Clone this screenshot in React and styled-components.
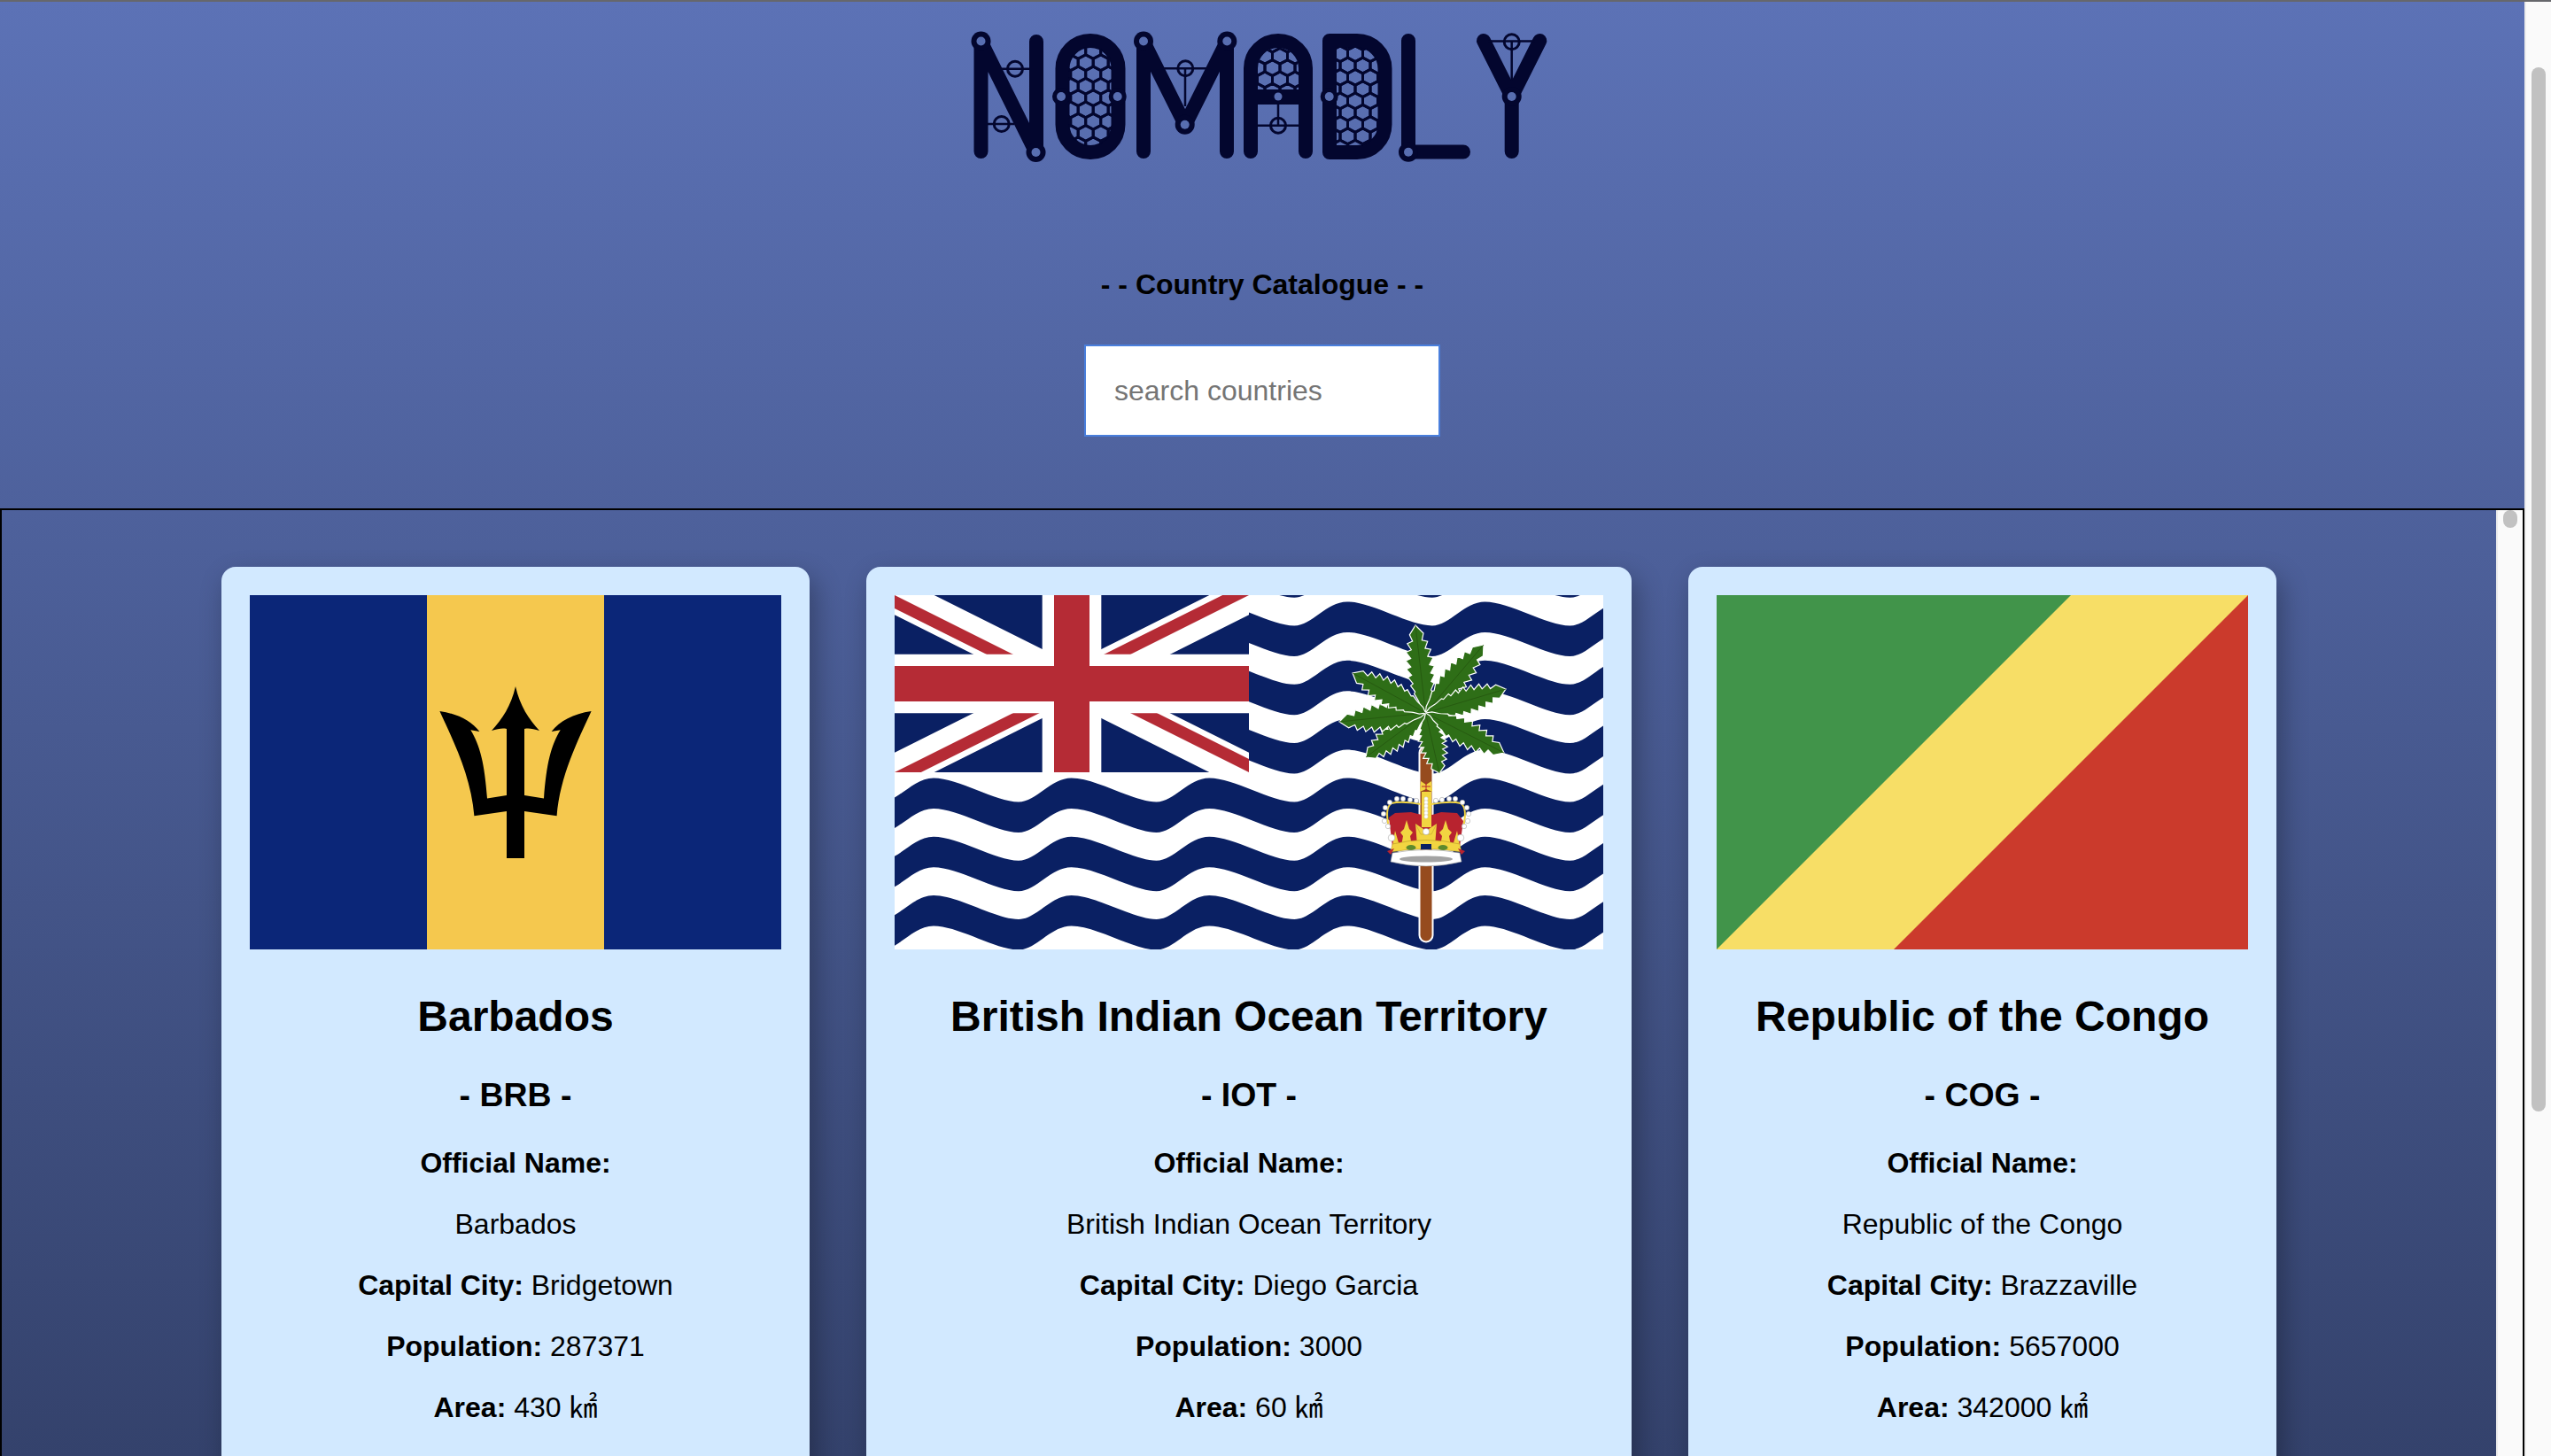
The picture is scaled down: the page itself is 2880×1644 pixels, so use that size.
import React from "react";
import styled, { createGlobalStyle } from "styled-components";

const INK = "#03062e";
const HOLE = "#586eb1";

const countries = [
  {
    name: "Barbados",
    code: "BRB",
    official: "Barbados",
    capital: "Bridgetown",
    population: 287371,
    area: 430,
    Flag: BarbadosFlag,
  },
  {
    name: "British Indian Ocean Territory",
    code: "IOT",
    official: "British Indian Ocean Territory",
    capital: "Diego Garcia",
    population: 3000,
    area: 60,
    Flag: BiotFlag,
  },
  {
    name: "Republic of the Congo",
    code: "COG",
    official: "Republic of the Congo",
    capital: "Brazzaville",
    population: 5657000,
    area: 342000,
    Flag: CongoFlag,
  },
];

// honeycomb cells inside the hollow letters of the logo
function Honeycomb({ clip, ax, ay, x0, x1, y0, y1 }) {
  const dx = 17;
  const dy = 13.3;
  const v = dy / 1.5;
  const cells = [];
  for (let r = -12; r <= 12; r++) {
    const y = ay + r * dy;
    if (y < y0 - 10 || y > y1 + 10) continue;
    for (let c = -8; c <= 8; c++) {
      const x = ax + c * dx + (r % 2 !== 0 ? dx / 2 : 0);
      if (x < x0 - 10 || x > x1 + 10) continue;
      const pts = [
        [x, y - v],
        [x + dx / 2, y - v / 2],
        [x + dx / 2, y + v / 2],
        [x, y + v],
        [x - dx / 2, y + v / 2],
        [x - dx / 2, y - v / 2],
      ];
      cells.push(<polygon key={r + "_" + c} points={pts.map((p) => p.join(",")).join(" ")} />);
    }
  }
  return (
    <g clipPath={`url(#${clip})`} fill="none" stroke={INK} strokeWidth="3">
      {cells}
    </g>
  );
}

function Node({ x, y, r = 11, hole = 5 }) {
  return (
    <>
      <circle cx={x} cy={y} r={r} fill={INK} />
      <circle cx={x} cy={y} r={hole} fill={HOLE} />
    </>
  );
}

function Ring({ x, y, r = 8.5 }) {
  return <circle cx={x} cy={y} r={r} fill="none" stroke={INK} strokeWidth="3" />;
}

function Logo() {
  return (
    <LogoSvg viewBox="1095 30 660 160" role="img" aria-label="Nomadly">
      <defs>
        <clipPath id="hole-o">
          <rect x="1206" y="53" width="50" height="112" rx="24" />
        </clipPath>
        <clipPath id="hole-a">
          <path d="M1420 102V77A23 23 0 0 1 1466 77V102Z" />
        </clipPath>
        <clipPath id="hole-d">
          <path d="M1508 53H1532A24 24 0 0 1 1556 77V141A24 24 0 0 1 1532 165H1508Z" />
        </clipPath>
      </defs>

      <g fill="none" stroke={INK} strokeWidth="16" strokeLinecap="round" strokeLinejoin="round">
        {/* N */}
        <path d="M1107.5 47V171M1107.5 47L1169.5 172M1170 47V171" />
        {/* O */}
        <rect x="1199.5" y="46" width="63" height="126" rx="31.5" />
        {/* M */}
        <path d="M1291 47V171M1291 47L1338 141L1385 47V171" />
        {/* A */}
        <path d="M1412 171V77A31 31 0 0 1 1474 77V171" />
        {/* D */}
        <path d="M1501 46H1532A31.5 31.5 0 0 1 1563.5 77.5V140.5A31.5 31.5 0 0 1 1532 172H1501Z" />
        {/* L */}
        <path d="M1590 46V171.5H1652" />
        {/* Y */}
        <path d="M1675 46L1706.7 109L1738.3 46M1706.7 109V171" />
      </g>

      <rect x="1412" y="101" width="62" height="17" fill={INK} />

      <g stroke={INK} strokeWidth="2.5">
        <path d="M1130 77.7H1162M1115 140H1145" />
        <path d="M1305 77.3H1370M1338 77V120" />
        <path d="M1443 109V142M1420 141.7H1466" />
        <path d="M1680 46.5H1733M1706.7 47V92" />
      </g>

      <Honeycomb clip="hole-o" ax={1225.7} ay={70.7} x0={1206} x1={1256} y0={53} y1={165} />
      <Honeycomb clip="hole-a" ax={1445} ay={63.3} x0={1420} x1={1466} y0={53} y1={102} />
      <Honeycomb clip="hole-d" ax={1530} ay={60.7} x0={1508} x1={1556} y0={53} y1={165} />

      <Node x={1107.5} y={46.5} />
      <Node x={1169.5} y={172} />
      <Ring x={1146} y={77.7} />
      <Ring x={1130.7} y={140} />
      <Node x={1198} y={109} r={10} />
      <Node x={1261.7} y={109} r={10} />
      <Node x={1291} y={46.5} />
      <Node x={1385.3} y={46.5} />
      <Node x={1337.7} y={140.7} />
      <Ring x={1338.3} y={77.3} />
      <circle cx={1443} cy={109} r={4.5} fill={HOLE} />
      <Ring x={1443} y={141.7} />
      <Node x={1500.7} y={109} r={10} />
      <Node x={1590} y={171.7} />
      <Node x={1706.7} y={109} />
      <Ring x={1706.7} y={47.3} />
    </LogoSvg>
  );
}

function BarbadosFlag() {
  return (
    <FlagSvg viewBox="0 0 600 400" $w={600}>
      <rect width="600" height="400" fill="#0b2678" />
      <rect x="200" width="200" height="400" fill="#f5c84e" />
      <path
        d="M300 103C305 125 315 140 327 153C320 151 315 150 310 151V226L332 229.5C335 190 340 170 350.7 152.3L340.6 154C350 142 365 134 385.6 131C370 165 350 205 346.6 249.3L310 244V297H290V244L253.4 249.3C250 205 230 165 214.4 131C235 134 250 142 259.4 154L249.3 152.3C260 170 265 190 268 229.5L290 226V151C285 150 280 151 273 153C285 140 295 125 300 103Z"
        fill="#000"
      />
    </FlagSvg>
  );
}

function CongoFlag() {
  return (
    <FlagSvg viewBox="0 0 600 400" $w={600}>
      <rect width="600" height="400" fill="#f7de66" />
      <path d="M0 0H400L0 400Z" fill="#41944a" />
      <path d="M600 0V400H200Z" fill="#cb3a2c" />
    </FlagSvg>
  );
}

function waveBand(top) {
  const period = 155.6;
  const start = -111.6;
  const count = 7;
  const end = start + period * count;
  let d = `M${start} ${top}`;
  for (let i = 0; i < count; i++) {
    const c = start + i * period;
    d += `C${c + 28} ${top} ${c + 70} ${top + 27} ${c + 96} ${top + 27}`;
    d += `C${c + 116} ${top + 27} ${c + 132} ${top} ${c + period} ${top}`;
  }
  const low = top + 34.5;
  d += `L${end} ${low}`;
  for (let i = count - 1; i >= 0; i--) {
    const c = start + i * period;
    d += `C${c + 132} ${low} ${c + 116} ${low + 27} ${c + 96} ${low + 27}`;
    d += `C${c + 70} ${low + 27} ${c + 28} ${low} ${c} ${low}`;
  }
  return d + "Z";
}

function frond(cx, cy, tx, ty, maxW = 16) {
  const len = Math.hypot(tx - cx, ty - cy);
  const ux = (tx - cx) / len;
  const uy = (ty - cy) / len;
  const at = (t, w) => `${cx + ux * len * t + -uy * w},${cy + uy * len * t + ux * w}`;
  const teeth = 9;
  const side = [];
  for (let i = 0; i < teeth; i++) {
    const t = 0.06 + (i / teeth) * 0.86;
    const w = maxW * Math.pow(Math.sin(Math.PI * Math.min(t + 0.04, 0.99)), 0.8);
    side.push([t, w * 0.68], [t + 0.075, w]);
  }
  const left = side.map(([t, w]) => at(t, w));
  const right = side.map(([t, w]) => at(t, -w)).reverse();
  return [at(0, 0), ...left, at(1, 0), ...right].join(" ");
}

const fronds = [
  [588, 34],
  [665, 56],
  [690, 106],
  [688, 178],
  [615, 201],
  [532, 183],
  [502, 143],
  [517, 88],
];

const pearls = [
  [567, 230],
  [574, 230],
  [582, 231],
  [589, 232],
  [559, 234],
  [554, 240],
  [552, 247],
  [553, 255],
  [557, 261],
];

function Crown() {
  return (
    <g>
      <path d="M558 251L565 246L583 245L595 248H607L617 245L635 246L642 255L638 284H562Z" fill="#b8232f" />
      <path
        d="M558 262Q553 240 561 235Q572 232 594 236M642 262Q647 240 639 235Q628 232 606 236"
        fill="none"
        stroke="#f2d541"
        strokeWidth="2"
      />
      <g fill="#f2d541">
        <path d="M578 254L581 264L585 268L582 272L584 283H572L574 272L571 268L575 264Z" />
        <path d="M622 254L625 264L629 268L626 272L628 283H616L618 272L615 268L619 264Z" />
        <path d="M562 283L565 266L570 283Z M630 283L635 266L638 283Z" />
        <path d="M588 258L600 266L612 258L610 283H590Z" />
      </g>
      <path d="M588 258L594 270H606L612 258" fill="none" stroke="#a98d20" strokeWidth=".4" />
      <rect x="595" y="222" width="11" height="40" fill="#f2d541" />
      <path d="M594 210L600 214L606 210L607 222L600 219L593 222Z" fill="#f2d541" />
      <path d="M600 211V222M595 216H605" stroke="#b8232f" strokeWidth="1" />
      {[230, 234, 238, 242, 246, 250].map((y) => (
        <circle key={y} cx="600" cy={y} r="2.2" fill="#fff" stroke="#ccc" strokeWidth=".5" />
      ))}
      {pearls.map(([x, y]) => (
        <g key={x + "_" + y} fill="#fff" stroke="#aaa" strokeWidth=".6">
          <circle cx={x} cy={y} r="2.7" />
          <circle cx={1200 - x} cy={y} r="2.7" />
        </g>
      ))}
      <g fill="#fff" stroke="#aaa" strokeWidth=".6">
        <circle cx="561" cy="274" r="3.8" />
        <circle cx="639" cy="274" r="3.8" />
        <circle cx="600" cy="267" r="3.6" />
      </g>
      <path d="M560 290L562 281Q600 272 638 281L640 290Q600 283 560 290Z" fill="#f2d541" stroke="#a98d20" strokeWidth=".5" />
      <ellipse cx="583" cy="285" rx="5.5" ry="3" fill="#5c8a2c" />
      <ellipse cx="619" cy="285" rx="5.5" ry="3" fill="#5c8a2c" />
      <rect x="594" y="281" width="12" height="6" fill="#0a2063" />
      <path d="M560 293L556 289L564 286Z M640 293L644 289L636 286Z" fill="#b8232f" />
      <path d="M562 291Q600 284 638 291L640 301Q600 311 560 301Z" fill="#fff" stroke="#999" strokeWidth=".6" />
      <ellipse cx="600" cy="298" rx="30" ry="3.6" fill="#a3a3a3" />
    </g>
  );
}

function BiotFlag() {
  return (
    <FlagSvg viewBox="0 0 800 400" $w={800}>
      <defs>
        <clipPath id="jack-diagonals">
          <path d="M30 15h30v15zv15h-30zh-30v-15zv-15h30z" />
        </clipPath>
      </defs>
      <rect width="800" height="400" fill="#fff" />
      <g fill="#0a2063">
        {[-1, 0, 1, 2, 3, 4, 5, 6].map((k) => (
          <path key={k} d={waveBand(7.5 + 66.3 * k)} />
        ))}
      </g>
      {/* keeps the wave hidden behind the jack from showing under its edge */}
      <rect y="200" width="400" height="3" fill="#fff" />
      <svg x="0" y="0" width="400" height="200" viewBox="0 0 60 30">
        <rect width="60" height="30" fill="#0a2063" />
        <path d="M0 0L60 30M60 0L0 30" stroke="#fff" strokeWidth="6" />
        <path d="M0 0L60 30M60 0L0 30" clipPath="url(#jack-diagonals)" stroke="#b52b35" strokeWidth="4" />
        <path d="M30 0V30M0 15H60" stroke="#fff" strokeWidth="10" />
        <path d="M30 0V30M0 15H60" stroke="#b52b35" strokeWidth="6" />
      </svg>
      <path d="M600 178V384" stroke="#fff" strokeWidth="17" strokeLinecap="round" />
      <path d="M600 178V384" stroke="#964b1e" strokeWidth="13" strokeLinecap="round" />
      {fronds.map(([x, y]) => (
        <g key={x}>
          <polygon points={frond(599.5, 133, x, y)} fill="#2e6e17" stroke="#fff" strokeWidth="1.2" />
          <path d={`M599.5 133L${x} ${y}`} stroke="#24560f" strokeWidth=".8" />
        </g>
      ))}
      <Crown />
    </FlagSvg>
  );
}

function App() {
  return (
    <Shell>
      <GlobalStyle />
      <WindowEdge />
      <Page>
        <Header>
          <Logo />
          <Tagline>- - Country Catalogue - -</Tagline>
          <Search placeholder="search countries" />
        </Header>
        <Catalogue>
          <CardGrid>
            {countries.map(({ Flag, ...c }) => (
              <Card key={c.code}>
                <Flag />
                <Name>{c.name}</Name>
                <Code>- {c.code} -</Code>
                <Fact>
                  <b>Official Name:</b>
                </Fact>
                <Fact>{c.official}</Fact>
                <Fact>
                  <b>Capital City:</b> {c.capital}
                </Fact>
                <Fact>
                  <b>Population:</b> {c.population}
                </Fact>
                <Fact>
                  <b>Area:</b> {c.area} ㎢
                </Fact>
              </Card>
            ))}
          </CardGrid>
          <ScrollGutter>
            <ScrollThumb $top={0} $height={20} />
          </ScrollGutter>
        </Catalogue>
      </Page>
      <ScrollGutter>
        <ScrollThumb $top={76} $height={1179} />
      </ScrollGutter>
    </Shell>
  );
}

export default App;

const GlobalStyle = createGlobalStyle`
  html, body {
    margin: 0;
    padding: 0;
    height: 100%;
    overflow: hidden;
  }

  body {
    font-family: "Liberation Sans", "Noto Sans CJK JP", sans-serif;
    color: #000;
  }
`;

const Shell = styled.div`
  height: 100vh;
  display: flex;
  overflow: hidden;
`;

const WindowEdge = styled.div`
  position: fixed;
  top: 0;
  left: 0;
  right: 0;
  height: 2px;
  background: #66676b;
  z-index: 2;
`;

const Page = styled.div`
  flex: 1;
  min-width: 0;
  display: flex;
  flex-direction: column;
  background: linear-gradient(#5c72b6 0, #34426c 100%);
`;

const ScrollGutter = styled.div`
  flex: none;
  width: 30px;
  box-sizing: border-box;
  background: #fafafa;
  border-left: 2px solid #ececec;
`;

const ScrollThumb = styled.div`
  width: 16px;
  height: ${(p) => p.$height}px;
  margin: ${(p) => p.$top}px 0 0 6px;
  border-radius: 8px;
  background: #c1c1c1;
`;

const Header = styled.header`
  height: 574px;
  flex: none;
  display: flex;
  flex-direction: column;
  align-items: center;
  padding-top: 30px;
  box-sizing: border-box;
`;

const LogoSvg = styled.svg`
  width: 660px;
  height: 160px;
  display: block;
`;

const Tagline = styled.p`
  margin: 113px 0 49px;
  font-size: 32px;
  line-height: 37px;
  font-weight: 700;
`;

const Search = styled.input`
  width: 402px;
  height: 104px;
  box-sizing: border-box;
  padding: 0 32px;
  border: 2px solid #4a7fdc;
  border-radius: 0;
  outline: none;
  background: #fff;
  font: 32px "Liberation Sans", sans-serif;

  &::placeholder {
    color: #757575;
  }
`;

const Catalogue = styled.section`
  flex: 1;
  min-height: 0;
  display: flex;
  overflow: hidden;
  border: 2px solid #000;
  border-bottom: 0;
`;

const CardGrid = styled.div`
  flex: 1;
  min-width: 0;
  box-sizing: border-box;
  padding: 64px 0;
  display: flex;
  flex-wrap: wrap;
  justify-content: center;
  align-items: flex-start;
  align-content: flex-start;
  gap: 64px;
`;

const Card = styled.article`
  padding: 32px;
  background: #d2e9ff;
  border-radius: 16px;
  box-shadow: 6px 12px 30px rgba(0, 0, 0, 0.3);
  text-align: center;
`;

const FlagSvg = styled.svg`
  display: block;
  width: ${(p) => p.$w}px;
  height: 400px;
`;

const Name = styled.h2`
  margin: 48px 0 40px;
  font-size: 48px;
  line-height: 55px;
`;

const Code = styled.h3`
  margin: 40px 0 37px;
  font-size: 37.44px;
  line-height: 43px;
`;

const Fact = styled.p`
  margin: 32px 0;
  font-size: 32px;
  line-height: 37px;
`;
